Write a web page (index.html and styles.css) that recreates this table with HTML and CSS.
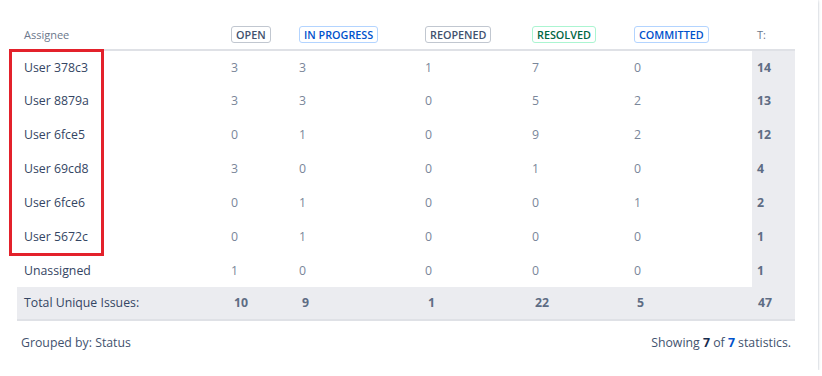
FILE: index.html
```html
<!DOCTYPE html>
<html>
<head>
<meta charset="utf-8">
<link rel="stylesheet" href="styles.css">
</head>
<body>
<div class="card">
  <table class="stats">
    <colgroup>
      <col class="c-name"><col class="c-open"><col class="c-prog"><col class="c-reop"><col class="c-res"><col class="c-com"><col class="c-tot">
    </colgroup>
    <thead>
      <tr>
        <th class="name">Assignee</th>
        <th><span class="loz loz-gray">Open</span></th>
        <th><span class="loz loz-blue">In Progress</span></th>
        <th><span class="loz loz-gray">Reopened</span></th>
        <th><span class="loz loz-green">Resolved</span></th>
        <th><span class="loz loz-blue">Committed</span></th>
        <th class="tcol">T:</th>
      </tr>
    </thead>
    <tbody>
      <tr><td class="name">User 378c3</td><td>3</td><td>3</td><td>1</td><td>7</td><td>0</td><td class="total">14</td></tr>
      <tr><td class="name">User 8879a</td><td>3</td><td>3</td><td>0</td><td>5</td><td>2</td><td class="total">13</td></tr>
      <tr><td class="name">User 6fce5</td><td>0</td><td>1</td><td>0</td><td>9</td><td>2</td><td class="total">12</td></tr>
      <tr><td class="name">User 69cd8</td><td>3</td><td>0</td><td>0</td><td>1</td><td>0</td><td class="total">4</td></tr>
      <tr><td class="name">User 6fce6</td><td>0</td><td>1</td><td>0</td><td>0</td><td>1</td><td class="total">2</td></tr>
      <tr><td class="name">User 5672c</td><td>0</td><td>1</td><td>0</td><td>0</td><td>0</td><td class="total">1</td></tr>
      <tr><td class="name">Unassigned</td><td>1</td><td>0</td><td>0</td><td>0</td><td>0</td><td class="total">1</td></tr>
    </tbody>
    <tfoot>
      <tr class="sum">
        <td class="name">Total Unique Issues:</td><td>10</td><td>9</td><td>1</td><td>22</td><td>5</td><td class="total">47</td>
      </tr>
    </tfoot>
  </table>
  <div class="footer">
    <span>Grouped by: Status</span>
    <span>Showing <b>7</b> of <b class="blue">7</b> statistics.</span>
  </div>
  <div class="highlight"></div>
</div>
</body>
</html>
```
FILE: styles.css
```css
html, body {
  margin: 0;
  padding: 0;
  background: #ffffff;
}
body {
  font-family: "Open Sans", "Noto Sans", sans-serif;
  font-size: 12.3px;
  color: #344563;
}
.card {
  position: relative;
  width: 818px;
  height: 370px;
  box-sizing: border-box;
  padding: 20px 23px 0 17px;
  background: #ffffff;
  box-shadow: 0 1px 3px rgba(9, 30, 66, 0.22), 0 0 1px rgba(9, 30, 66, 0.2);
}
.stats {
  width: 778px;
  border-collapse: collapse;
  table-layout: fixed;
}
.c-name { width: 209px; }
.c-open { width: 68px; }
.c-prog { width: 126px; }
.c-reop { width: 107px; }
.c-res { width: 102px; }
.c-com { width: 123px; }
.c-tot { width: 43px; }

.stats th, .stats td {
  padding: 0 0 0 5px;
  text-align: left;
  vertical-align: middle;
  white-space: nowrap;
}
.stats th.name, .stats td.name { padding-left: 7px; }

.stats thead tr { height: 30px; }
.stats thead th {
  border-bottom: 2px solid #dfe1e6;
  font-size: 11px;
  font-weight: 400;
  color: #6b778c;
}
.stats tbody tr { height: 33.9px; }
.stats tbody td { color: #7a869a; }
.stats tbody td.name { color: #344563; }
.stats td.total {
  background: #ebecf0;
  font-weight: 700;
  color: #5e6c84;
}
.stats tr.sum { height: 32.5px; }
.stats tr.sum td {
  background: #ebecf0;
  border-bottom: 2px solid #dfe1e6;
  font-weight: 700;
  color: #5e6c84;
  padding-left: 8px;
}
.stats tr.sum td.name {
  font-weight: 400;
  color: #344563;
  padding-left: 7px;
}
.stats tr.sum td.total { padding-left: 6px; }

.loz {
  display: inline-block;
  box-sizing: border-box;
  height: 17px;
  line-height: 15px;
  padding: 0 4px;
  border: 1px solid #c1c7d0;
  border-radius: 3px;
  font-size: 10.8px;
  font-weight: 600;
  text-transform: uppercase;
  color: #42526e;
  background: #ffffff;
  vertical-align: middle;
}
.loz-gray { border-color: #c1c7d0; color: #42526e; }
.loz-blue { border-color: #b3d4ff; color: #0052cc; }
.loz-green { border-color: #abf5d1; color: #006644; }

.footer {
  display: flex;
  justify-content: space-between;
  padding: 14px 4px 0 4px;
  line-height: 16px;
  color: #42526e;
}
.footer b { color: #172b4d; }
.footer b.blue { color: #0052cc; }

.highlight {
  position: absolute;
  left: 9px;
  top: 49px;
  width: 95px;
  height: 207px;
  box-sizing: border-box;
  border: 3px solid #e3212b;
}
```
